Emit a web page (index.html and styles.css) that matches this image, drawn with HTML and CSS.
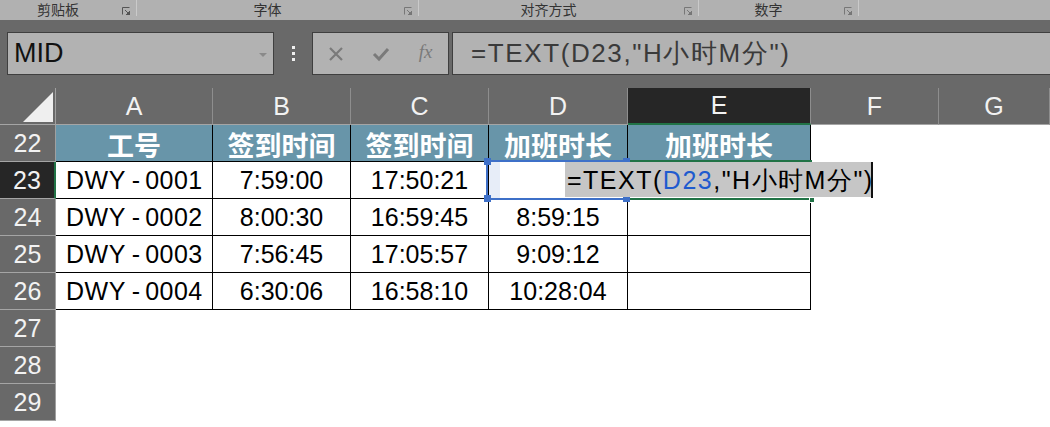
FILE: index.html
```html
<!DOCTYPE html>
<html lang="zh">
<head>
  <meta charset="UTF-8" />
  <title>TEXT 函数</title>
  <link rel="stylesheet" href="styles.css">
</head>
<body>

  <!-- ribbon group labels -->
  <div class="ribbon">
    <div class="group g1"><span class="glabel">剪贴板</span><span class="launch"><svg width="8" height="8" viewBox="0 0 8 8"><path d="M0.5 7.5V0.5H7.5" fill="none" stroke="#555" /><path d="M3 3L7 7M4 8H8V4Z" fill="#555" stroke="#555" /></svg></span></div>
    <div class="group g2"><span class="glabel">字体</span><span class="launch"><svg width="8" height="8" viewBox="0 0 8 8"><path d="M0.5 7.5V0.5H7.5" fill="none" stroke="#777" /><path d="M3 3L7 7M4 8H8V4Z" fill="#777" stroke="#777" /></svg></span></div>
    <div class="group g3"><span class="glabel">对齐方式</span><span class="launch"><svg width="8" height="8" viewBox="0 0 8 8"><path d="M0.5 7.5V0.5H7.5" fill="none" stroke="#777" /><path d="M3 3L7 7M4 8H8V4Z" fill="#777" stroke="#777" /></svg></span></div>
    <div class="group g4"><span class="glabel">数字</span><span class="launch"><svg width="8" height="8" viewBox="0 0 8 8"><path d="M0.5 7.5V0.5H7.5" fill="none" stroke="#777" /><path d="M3 3L7 7M4 8H8V4Z" fill="#777" stroke="#777" /></svg></span></div>
  </div>

  <!-- name box + formula bar -->
  <div class="fbar">
    <div class="namebox">
      <span>MID</span>
      <svg class="drop" width="8" height="4" viewBox="0 0 8 4"><path d="M0 0H8L4 4Z" fill="#8a8a8a" /></svg>
    </div>
    <div class="dots"><i></i><i></i><i></i></div>
    <div class="fxbtns">
      <span class="fxb"><svg width="16" height="16" viewBox="0 0 16 16"><path d="M2 2L14 14M14 2L2 14" stroke="#7a7a7a" stroke-width="2.2" /></svg></span>
      <span class="fxb"><svg width="18" height="16" viewBox="0 0 18 16"><path d="M2 8L7 13L16 3" fill="none" stroke="#7a7a7a" stroke-width="3" /></svg></span>
      <span class="fxb fx">fx</span>
    </div>
    <div class="formula">=TEXT(D23,"H小时M分")</div>
  </div>

  <!-- sheet -->
  <div class="sheet">
    <div class="corner"><div class="tri"></div></div>
    <div class="ch">A</div>
    <div class="ch">B</div>
    <div class="ch">C</div>
    <div class="ch">D</div>
    <div class="ch sel">E</div>
    <div class="ch">F</div>
    <div class="ch">G</div>

    <div class="rh">22</div>
    <div class="c t th">工号</div>
    <div class="c t th">签到时间</div>
    <div class="c t th">签到时间</div>
    <div class="c t th">加班时长</div>
    <div class="c t th">加班时长</div>
    <div class="c"></div>
    <div class="c"></div>

    <div class="rh sel">23</div>
    <div class="c t l">DWY<span class="dash">-</span>0001</div>
    <div class="c t">7:59:00</div>
    <div class="c t">17:50:21</div>
    <div class="c t"></div>
    <div class="c t"></div>
    <div class="c"></div>
    <div class="c"></div>

    <div class="rh">24</div>
    <div class="c t l">DWY<span class="dash">-</span>0002</div>
    <div class="c t">8:00:30</div>
    <div class="c t">16:59:45</div>
    <div class="c t">8:59:15</div>
    <div class="c t"></div>
    <div class="c"></div>
    <div class="c"></div>

    <div class="rh">25</div>
    <div class="c t l">DWY<span class="dash">-</span>0003</div>
    <div class="c t">7:56:45</div>
    <div class="c t">17:05:57</div>
    <div class="c t">9:09:12</div>
    <div class="c t"></div>
    <div class="c"></div>
    <div class="c"></div>

    <div class="rh">26</div>
    <div class="c t l">DWY<span class="dash">-</span>0004</div>
    <div class="c t">6:30:06</div>
    <div class="c t">16:58:10</div>
    <div class="c t">10:28:04</div>
    <div class="c t"></div>
    <div class="c"></div>
    <div class="c"></div>

    <div class="rh">27</div>
    <div class="c"></div><div class="c"></div><div class="c"></div><div class="c"></div><div class="c"></div><div class="c"></div><div class="c"></div>
    <div class="rh">28</div>
    <div class="c"></div><div class="c"></div><div class="c"></div><div class="c"></div><div class="c"></div><div class="c"></div><div class="c"></div>
    <div class="rh">29</div>
    <div class="c"></div><div class="c"></div><div class="c"></div><div class="c"></div><div class="c"></div><div class="c"></div><div class="c"></div>

    <!-- selections and in-cell editor sit over the grid -->
    <div class="active"><i class="handle"></i></div>
    <div class="ref">
      <div class="strip"></div>
      <i class="h tl"></i><i class="h tr"></i><i class="h bl"></i><i class="h br"></i>
    </div>
    <div class="edit">=TEXT(<span class="refc">D23</span>,"H小时M分")</div>
    <div class="caret"></div>
  </div>

</body>
</html>
```

FILE: styles.css
```css
* {
  box-sizing: border-box;
}

html, body {
  margin: 0;
}

body {
  width: 1050px;
  height: 427px;
  overflow: hidden;
  background-color: #fff;
  font-family: "Liberation Sans", Arial, sans-serif;
}

/* ribbon strip */
.ribbon {
  display: flex;
  height: 20px;
  background-color: #b1b1b1;
  color: #333;
  font-family: "Noto Sans CJK SC", sans-serif;
  font-size: 14px;
}

.group {
  display: flex;
  align-items: center;
  height: 16px;
  border-right: 1px solid #cacaca;
}

.g1 { width: 137px; }
.g2 { width: 282px; }
.g3 { width: 280px; }
.g4 { width: 160px; }

.glabel {
  flex: 1;
  text-align: center;
  line-height: 16px;
  padding-top: 2px;
}

.launch {
  width: 20px;
  display: flex;
  justify-content: center;
  padding-top: 6px;
}

/* formula bar */
.fbar {
  display: flex;
  height: 68px;
  padding: 12px 0 0 7px;
  background-color: #696969;
}

.namebox {
  display: flex;
  align-items: center;
  width: 267px;
  height: 43px;
  padding-left: 6px;
  border: 1px solid #3f3f3f;
  background-color: #b2b2b2;
  color: #111;
  font-size: 27px;
}

.drop {
  margin-left: auto;
  margin-right: 6px;
  margin-top: 2px;
}

.dots {
  display: flex;
  flex-direction: column;
  align-items: center;
  justify-content: center;
  gap: 3px;
  width: 38px;
  height: 43px;
}

.dots i {
  width: 3px;
  height: 3px;
  background-color: #f0f0f0;
}

.fxbtns {
  display: flex;
  width: 137px;
  height: 43px;
  border: 1px solid #3f3f3f;
  background-color: #b2b2b2;
}

.fxb {
  display: flex;
  align-items: center;
  justify-content: center;
  width: 46px;
}

.fx {
  font-family: "Liberation Serif", serif;
  font-style: italic;
  font-size: 19px;
  color: #7a7a7a;
  padding-bottom: 3px;
}

.formula {
  flex: 1;
  height: 43px;
  margin-left: 3px;
  margin-right: -2px;
  padding-left: 18px;
  border: 1px solid #3f3f3f;
  background-color: #b2b2b2;
  color: #3a3a3a;
  font-size: 26px;
  letter-spacing: 1.6px;
  line-height: 40px;
  white-space: nowrap;
}

/* grid */
.sheet {
  position: relative;
  display: grid;
  grid-template-columns: 56px 157px 138px 138px 139px 183px 128px 111px;
  grid-template-rows: repeat(10, 37px);
  height: 339px;
  overflow: hidden;
}

.corner {
  display: flex;
  justify-content: flex-end;
  align-items: flex-end;
  padding: 0 2px 2px 0;
  background-color: #696969;
  border-right: 1px solid #a0a0a0;
  border-bottom: 1px solid #a5a5a5;
}

.tri {
  width: 30px;
  height: 30px;
  background-color: #efefef;
  clip-path: polygon(100% 0, 100% 100%, 0 100%);
}

.ch, .rh {
  display: flex;
  align-items: center;
  justify-content: center;
  background-color: #696969;
  color: #f2f2f2;
  font-size: 25px;
}

.ch {
  border-right: 1px solid #8e8e8e;
  border-bottom: 1px solid #a5a5a5;
}

.ch.sel {
  background-color: #262626;
  border-bottom: 2px solid #217346;
}

.rh {
  border-right: 1px solid #a0a0a0;
  border-bottom: 1px solid #a5a5a5;
}

.rh.sel {
  background-color: #262626;
  border-right: 2px solid #217346;
}

.c {
  display: flex;
  align-items: center;
  justify-content: center;
  background-color: #fff;
  color: #000;
  font-size: 25px;
  white-space: nowrap;
}

.t {
  border-right: 1px solid #000;
  border-bottom: 1px solid #000;
}

.th {
  background-color: #6895a9;
  color: #fff;
  font-family: "Noto Sans CJK SC", sans-serif;
  font-weight: bold;
  font-size: 27px;
  padding-top: 2px;
}

.l {
  justify-content: flex-start;
  padding-left: 10px;
}

.dash {
  margin: 0 5px 0 6px;
  letter-spacing: 0;
}

.l {
  letter-spacing: 0.5px;
}

/* overlays */
.active {
  position: absolute;
  left: 626px;
  top: 72px;
  width: 186px;
  height: 40px;
  border: 2px solid #217346;
}

.handle {
  position: absolute;
  right: -5px;
  bottom: -5px;
  width: 6px;
  height: 6px;
  background-color: #217346;
  border: 1px solid #fff;
}

.ref {
  position: absolute;
  left: 486px;
  top: 72px;
  width: 142px;
  height: 40px;
  border: 2px solid #3e70c8;
}

.strip {
  width: 11px;
  height: 100%;
  margin-left: 1px;
  background-color: #e7edf8;
}

.h {
  position: absolute;
  width: 7px;
  height: 7px;
  background-color: #3e70c8;
}

.tl { left: -4px; top: -4px; }
.tr { right: -4px; top: -4px; }
.bl { left: -4px; bottom: -4px; }
.br { right: -4px; bottom: -4px; }

.edit {
  position: absolute;
  left: 565px;
  top: 74px;
  width: 306px;
  height: 35px;
  padding-left: 2px;
  background-color: #c6c6c6;
  color: #000;
  font-size: 25px;
  letter-spacing: 1.5px;
  line-height: 36px;
  white-space: nowrap;
}

.refc {
  color: #1f5bcf;
}

.caret {
  position: absolute;
  left: 871px;
  top: 74px;
  width: 2px;
  height: 36px;
  background-color: #111;
}
```
